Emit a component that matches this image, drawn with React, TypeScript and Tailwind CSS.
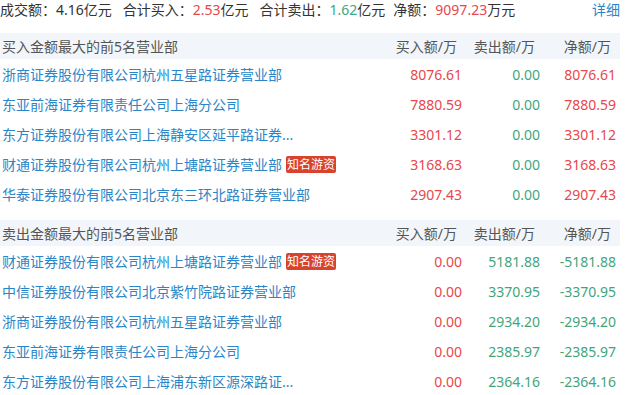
import React from "react";

type Row = { name: string; tag?: boolean; buy: string; sell: string; net: string };

const buyRows: Row[] = [
  { name: "浙商证券股份有限公司杭州五星路证券营业部", buy: "8076.61", sell: "0.00", net: "8076.61" },
  { name: "东亚前海证券有限责任公司上海分公司", buy: "7880.59", sell: "0.00", net: "7880.59" },
  { name: "东方证券股份有限公司上海静安区延平路证券...", buy: "3301.12", sell: "0.00", net: "3301.12" },
  { name: "财通证券股份有限公司杭州上塘路证券营业部", tag: true, buy: "3168.63", sell: "0.00", net: "3168.63" },
  { name: "华泰证券股份有限公司北京东三环北路证券营业部", buy: "2907.43", sell: "0.00", net: "2907.43" },
];

const sellRows: Row[] = [
  { name: "财通证券股份有限公司杭州上塘路证券营业部", tag: true, buy: "0.00", sell: "5181.88", net: "-5181.88" },
  { name: "中信证券股份有限公司北京紫竹院路证券营业部", buy: "0.00", sell: "3370.95", net: "-3370.95" },
  { name: "浙商证券股份有限公司杭州五星路证券营业部", buy: "0.00", sell: "2934.20", net: "-2934.20" },
  { name: "东亚前海证券有限责任公司上海分公司", buy: "0.00", sell: "2385.97", net: "-2385.97" },
  { name: "东方证券股份有限公司上海浦东新区源深路证...", buy: "0.00", sell: "2364.16", net: "-2364.16" },
];

const red = "text-[#e8474b]";
const green = "text-[#3fa67c]";

const Section = ({ title, rows, sell }: { title: string; rows: Row[]; sell?: boolean }) => (
  <div>
    <div className="grid grid-cols-[1fr_78px_78px_76px] h-[26px] items-center bg-[#f2f5f9] text-[#555]">
      <div className="pl-[2px]">{title}</div>
      <div className="text-right pr-[9px]">买入额/万</div>
      <div className="text-right pr-[9px]">卖出额/万</div>
      <div className="text-right pr-[9px]">净额/万</div>
    </div>
    {rows.map((r, i) => (
      <div key={i} className="grid grid-cols-[1fr_78px_78px_76px] h-[30px] items-center">
        <div className="pl-[2px] flex items-center gap-[4px] whitespace-nowrap text-[#2a86c8]">
          <span>{r.name}</span>
          {r.tag && (
            <span className="bg-[#d8432d] text-white text-[12px] leading-[17px] px-[1px] rounded-[2px]">知名游资</span>
          )}
        </div>
        <div className={`text-right pr-[4px] ${red}`}>{r.buy}</div>
        <div className={`text-right pr-[4px] ${green}`}>{r.sell}</div>
        <div className={`text-right pr-[4px] ${sell ? green : red}`}>{r.net}</div>
      </div>
    ))}
  </div>
);

export default function App() {
  return (
    <div className="w-[626px] h-[395px] overflow-hidden bg-white font-['Noto_Sans','Noto_Sans_CJK_SC',sans-serif] text-[14px]">
      <div className="w-[620px]">
        <div className="flex items-center h-[20px] leading-[20px] text-[#333]">
          <span className="mr-[11px]">成交额：4.16亿元</span>
          <span className="mr-[11px]">
            合计买入：<span className={red}>2.53</span>亿元
          </span>
          <span className="mr-[8px]">
            合计卖出：<span className={green}>1.62</span>亿元
          </span>
          <span>
            净额：<span className={red}>9097.23</span>万元
          </span>
          <span className="ml-auto text-[#2a86c8]">详细</span>
        </div>
        <div className="h-[13px]" />
        <Section title="买入金额最大的前5名营业部" rows={buyRows} />
        <div className="h-[11px]" />
        <Section title="卖出金额最大的前5名营业部" rows={sellRows} sell />
      </div>
    </div>
  );
}
